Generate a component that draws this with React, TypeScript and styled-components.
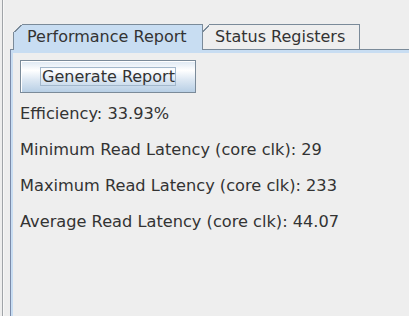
import React from "react";
import styled, { createGlobalStyle } from "styled-components";

const Global = createGlobalStyle`
  html, body { margin: 0; padding: 0; background: #eeeeee; }
  body { font-family: "DejaVu Sans", "Liberation Sans", sans-serif; }
`;

const Page = styled.div`
  display: flex;
  height: 316px;
  width: 409px;
  overflow: hidden;
  background: #eeeeee;
`;

const EdgeLine = styled.div`
  width: 1px;
  margin-left: 2px;
  background: #a0a4a8;
  border-right: 1px solid #f8f8f8;
  margin-right: 6px;
`;

const TabbedPane = styled.div`
  flex: 1;
  display: flex;
  flex-direction: column;
  padding-top: 24px;
  min-width: 0;
`;

const TabRow = styled.div`
  display: flex;
  align-items: flex-end;
  padding-left: 3px;
  height: 25px;
`;

const Tab = styled.div<{ $selected?: boolean; $w: number }>`
  position: relative;
  box-sizing: border-box;
  width: ${(p) => p.$w}px;
  height: ${(p) => (p.$selected ? 26 : 25)}px;
  margin-bottom: ${(p) => (p.$selected ? -1 : 0)}px;
  z-index: ${(p) => (p.$selected ? 1 : 0)};
  padding: 3px 0 0 ${(p) => (p.$selected ? 13 : 12)}px;
  border-top: 1px solid #7a8a99;
  border-right: 1px solid #7a8a99;
  border-left: ${(p) => (p.$selected ? "1px solid #7a8a99" : "none")};
  background: ${(p) => (p.$selected ? "#c8ddf2" : "#eeeeee")};
  font-size: 16px;
  line-height: 18px;
  color: #333333;
  white-space: nowrap;
  &::before {
    content: "";
    position: absolute;
    top: -1px;
    left: -1px;
    width: ${(p) => (p.$selected ? 10 : 8)}px;
    height: 9px;
    background: linear-gradient(
      to bottom right,
      #eeeeee 0,
      #eeeeee calc(50% - 0.6px),
      #7a8a99 calc(50% - 0.6px),
      #7a8a99 calc(50% + 0.6px),
      transparent calc(50% + 0.6px)
    );
  }
`;

const ContentPane = styled.div`
  flex: 1;
  display: flex;
  border-top: 1px solid #7a8a99;
  border-left: 1px solid #7a8aa9;
  background: #c8ddf2;
  padding: 3px 0 0 2px;
`;

const Panel = styled.div`
  flex: 1;
  background: #eeeeee;
  display: flex;
  flex-direction: column;
  align-items: flex-start;
  padding: 7px 0 0 7px;
`;

const Button = styled.button`
  box-sizing: border-box;
  width: 176px;
  height: 33px;
  border: 1px solid #7a8a99;
  box-shadow: inset 1px 1px 0 #ffffff;
  background: linear-gradient(
    to bottom,
    #dde8f3 0%,
    #ffffff 30%,
    #dde8f3 60%,
    #b8cfe5 100%
  );
  display: flex;
  align-items: center;
  justify-content: center;
  padding: 0;
  margin: 0;
  font-family: "DejaVu Sans", "Liberation Sans", sans-serif;
  font-size: 16px;
  color: #333333;
  cursor: default;
`;

const FocusLabel = styled.span`
  border: 1px solid #a3b8cc;
  line-height: 17px;
  padding: 0 0 0 1px;
`;

const Stats = styled.div`
  display: flex;
  flex-direction: column;
  gap: 18px;
  margin-top: 12px;
`;

const Stat = styled.div`
  font-size: 16.2px;
  line-height: 18px;
  color: #333333;
  white-space: nowrap;
`;

const stats = [
  "Efficiency: 33.93%",
  "Minimum Read Latency (core clk): 29",
  "Maximum Read Latency (core clk): 233",
  "Average Read Latency (core clk): 44.07",
];

export default function App() {
  return (
    <>
      <Global />
      <Page>
        <EdgeLine />
        <TabbedPane>
          <TabRow>
            <Tab $selected $w={190}>Performance Report</Tab>
            <Tab $w={157}>Status Registers</Tab>
          </TabRow>
          <ContentPane>
            <Panel>
              <Button>
                <FocusLabel>Generate Report</FocusLabel>
              </Button>
              <Stats>
                {stats.map((s) => (
                  <Stat key={s}>{s}</Stat>
                ))}
              </Stats>
            </Panel>
          </ContentPane>
        </TabbedPane>
      </Page>
    </>
  );
}
